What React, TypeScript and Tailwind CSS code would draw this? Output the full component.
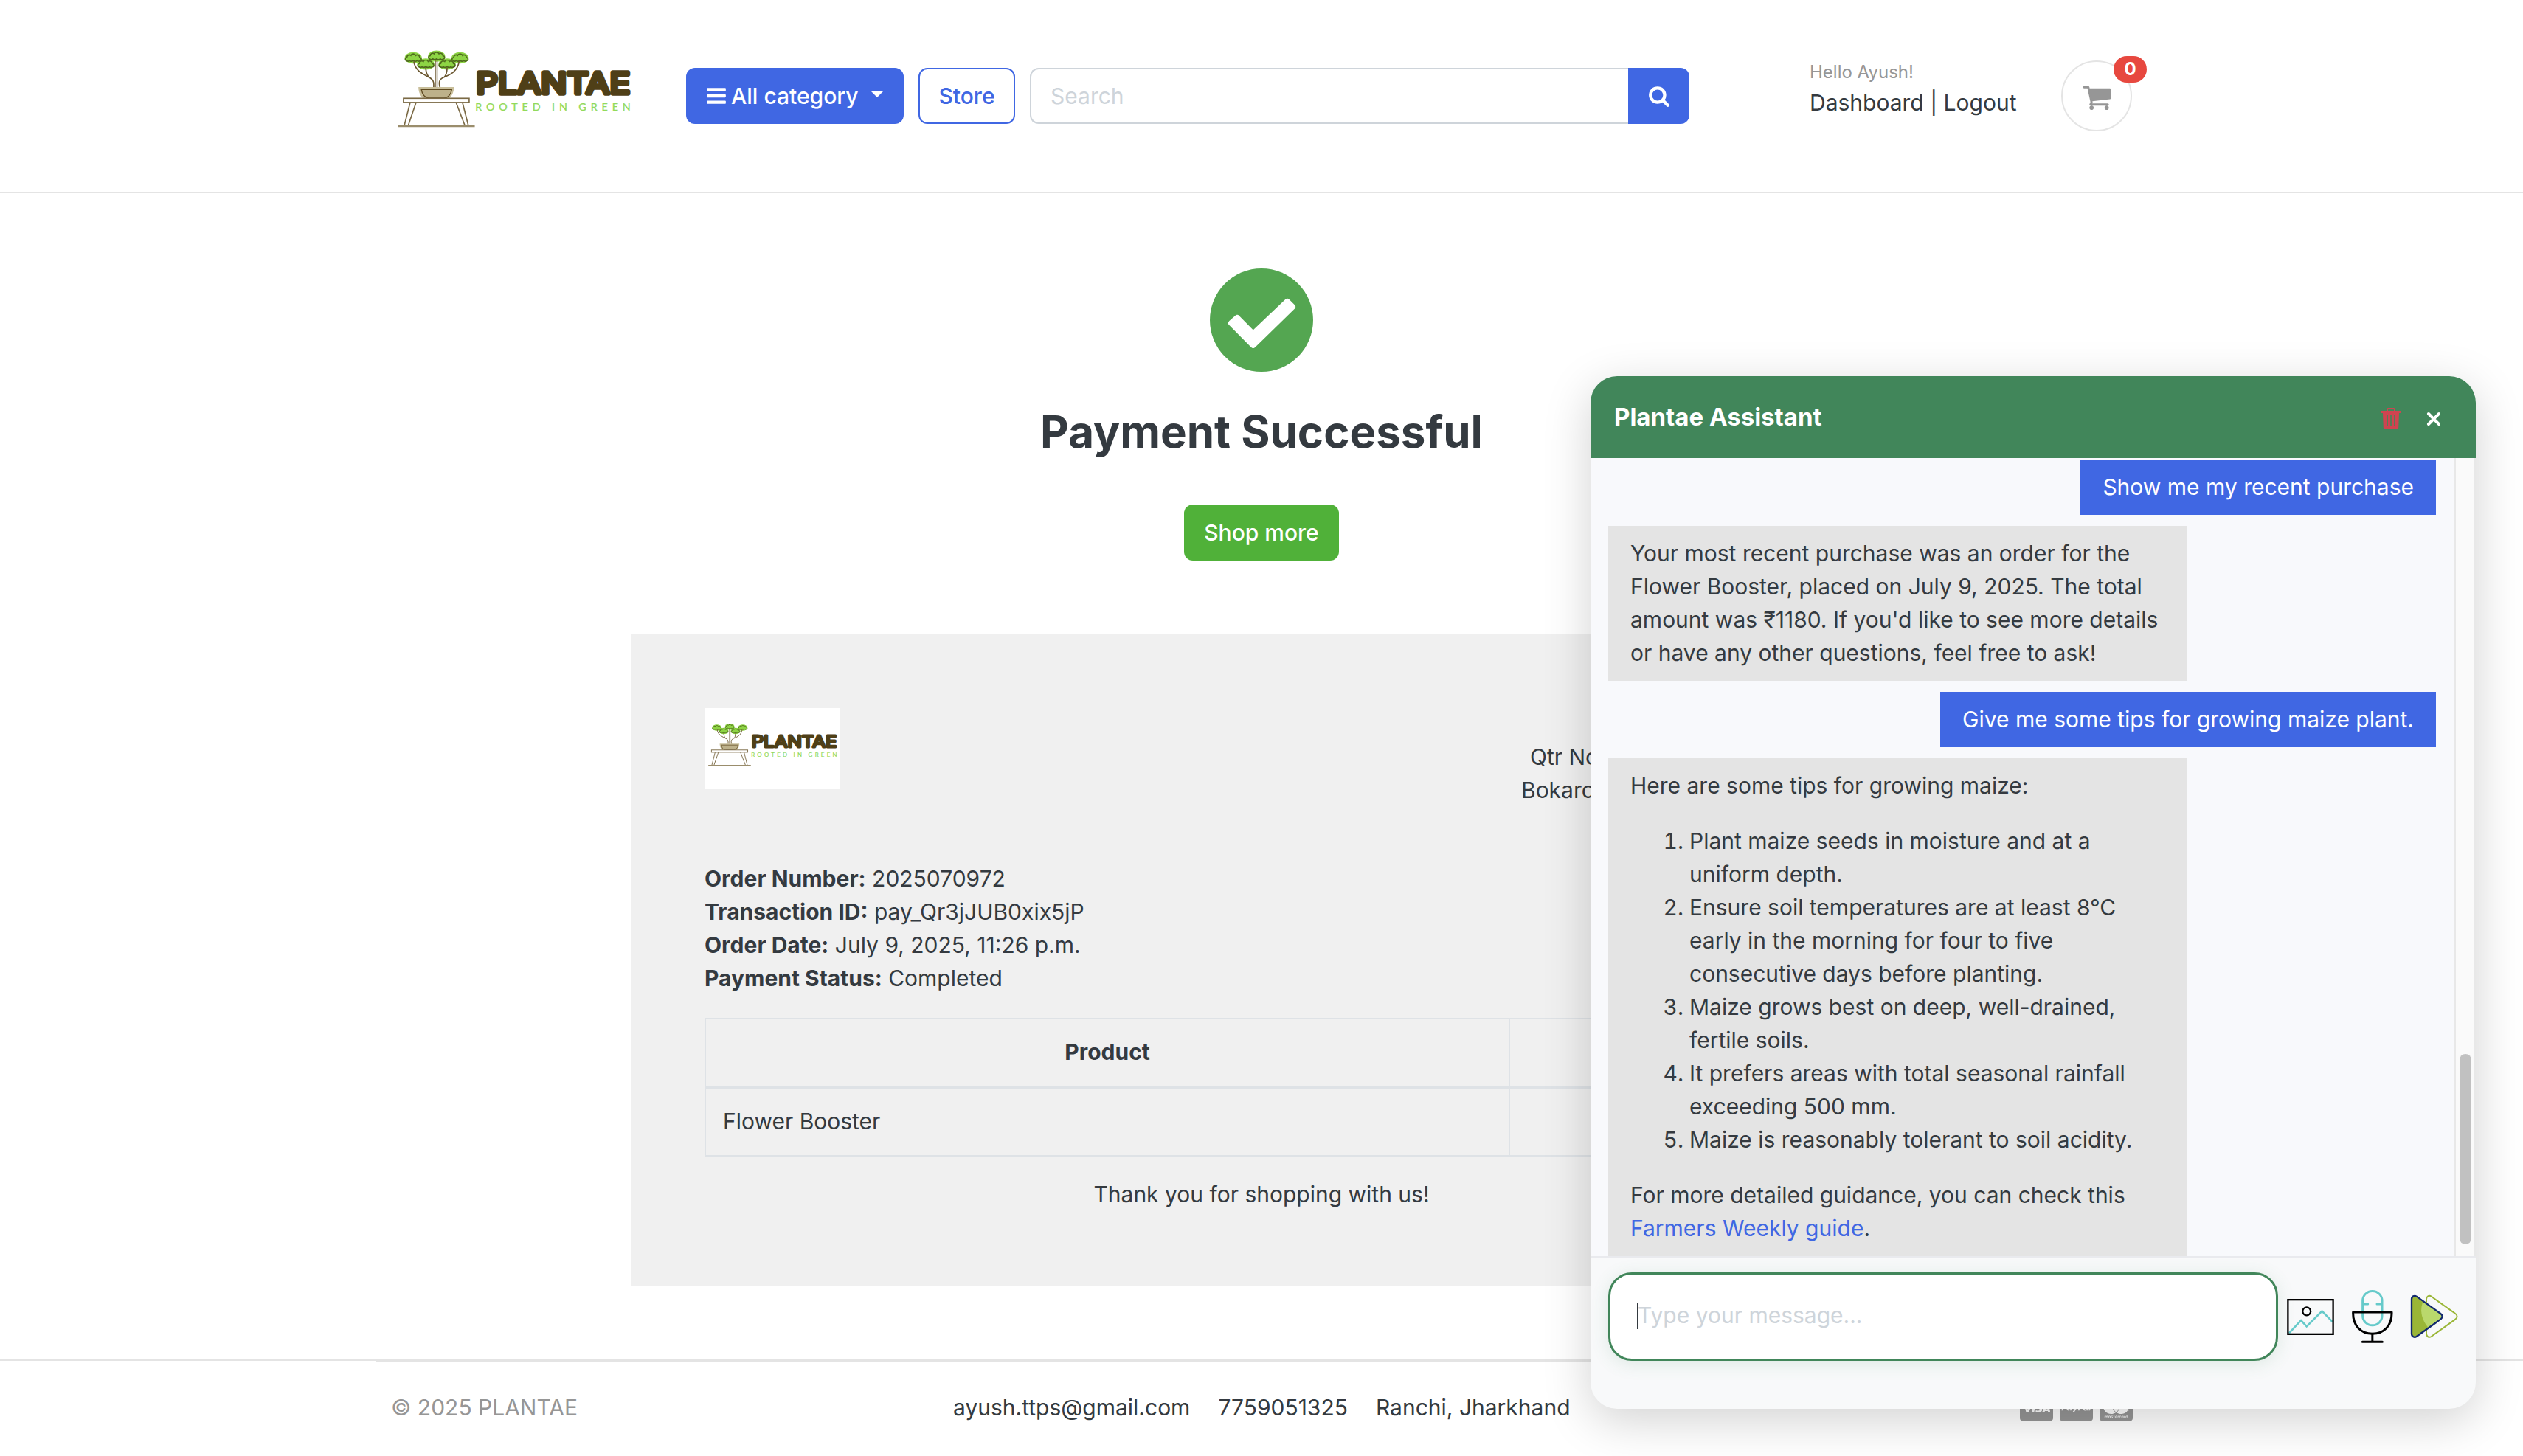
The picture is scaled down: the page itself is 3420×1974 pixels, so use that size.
import React from "react";
import { FaCcVisa, FaCcPaypal, FaCcMastercard } from "react-icons/fa";

const BARS =
  "M1664 1344v128q0 26-19 45t-45 19h-1408q-26 0-45-19t-19-45v-128q0-26 19-45t45-19h1408q26 0 45 19t19 45zm0-512v128q0 26-19 45t-45 19h-1408q-26 0-45-19t-19-45v-128q0-26 19-45t45-19h1408q26 0 45 19t19 45zm0-512v128q0 26-19 45t-45 19h-1408q-26 0-45-19t-19-45v-128q0-26 19-45t45-19h1408q26 0 45 19t19 45z";
const SEARCH =
  "M1216 832q0-185-131.5-316.5t-316.5-131.5-316.5 131.5-131.5 316.5 131.5 316.5 316.5 131.5 316.5-131.5 131.5-316.5zm512 832q0 52-38 90t-90 38q-54 0-90-38l-343-342q-179 124-399 124-143 0-273.5-55.5t-225-150-150-225-55.5-273.5 55.5-273.5 150-225 225-150 273.5-55.5 273.5 55.5 225 150 150 225 55.5 273.5q0 220-124 399l343 343q37 37 37 90z";
const CART =
  "M704 1536q0 52-38 90t-90 38-90-38-38-90 38-90 90-38 90 38 38 90zm896 0q0 52-38 90t-90 38-90-38-38-90 38-90 90-38 90 38 38 90zm128-1088v512q0 24-16.5 42.5t-40.5 21.5l-1044 122q13 60 13 70 0 16-24 64h920q26 0 45 19t19 45-19 45-45 19h-1024q-26 0-45-19t-19-45q0-11 8-31.5t16-36 21.5-40 15.5-29.5l-177-823h-204q-26 0-45-19t-19-45 19-45 45-19h256q16 0 28.5 6.5t19.5 15.5 13 24.5 8 26 5.5 29.5 4.5 26h1201q26 0 45 19t19 45z";

function Glyph({ d, className }: { d: string; className: string }) {
  return (
    <svg viewBox="0 0 1792 1792" className={className} fill="currentColor">
      <path d={d} />
    </svg>
  );
}

const CLOUD =
  "M-27 12c-8-2-8-12 1-14c0-9 10-13 16-8c3-8 17-8 20 0c6-5 16-1 16 8c9 2 9 12 1 14c-4 3-10 2-12-1c-3 4-10 4-15 0c-5 4-12 4-15 0c-2 3-8 4-12 1z";

function Logo({ className }: { className: string }) {
  const crowns: [number, number][] = [
    [91, 67],
    [282, 67],
    [142, 92],
    [229, 92],
    [186, 60],
  ];
  return (
    <svg viewBox="0 0 1024 390" className={className} fill="none">
      {crowns.map(([x, y]) => (
        <ellipse key={x} cx={x} cy={y} rx="35" ry="23" fill="#8dd444" />
      ))}
      {crowns.map(([x, y]) => (
        <path key={x} d={CLOUD} transform={`translate(${x} ${y})`} stroke="#4e6a1c" strokeWidth="5" />
      ))}
      <g stroke="#6b5730" strokeWidth="5">
        <path d="M93 82c6 40 40 52 66 66c18 10 16 26 15 46" />
        <path d="M142 106c0 22 6 32 14 40" />
        <path d="M183 78v116M189 78v116" strokeWidth="3" />
        <path d="M278 82c-6 40-36 54-62 64c-22 9-22 24-14 48" />
        <path d="M229 106c0 22-4 32-12 40" />
      </g>
      <path d="M112 186h145c0 30-18 54-42 54h-62c-24 0-41-24-41-54z" fill="#c9bf9b" />
      <path d="M124 196h124c-3 20-15 35-32 35h-60c-17 0-29-15-32-35z" fill="#bdb18a" stroke="#5f4a20" strokeWidth="4" />
      <g stroke="#7b6a45" strokeWidth="5">
        <rect x="51" y="232" width="268" height="17" fill="#fff" />
        <path d="M78 250L54 344M102 250L70 344M266 250L302 344M292 250L316 344" />
      </g>
      <path d="M28 346h314" stroke="#9a8d6c" strokeWidth="7" />
      <text
        x="347"
        y="213"
        textLength="630"
        lengthAdjust="spacingAndGlyphs"
        fontFamily="Inter, sans-serif"
        fontWeight="400"
        fontSize="120"
        fill="#4f3f17"
        stroke="#4f3f17"
        strokeWidth="16"
        strokeLinejoin="round"
      >
        PLANTAE
      </text>
      <text
        x="344"
        y="281"
        textLength="634"
        lengthAdjust="spacing"
        fontFamily="Lato, sans-serif"
        fontSize="43"
        fill="#92da5a"
        stroke="#92da5a"
      >
        ROOTED IN GREEN
      </text>
    </svg>
  );
}

function Header() {
  return (
    <header className="h-[262px] border-b-2 border-[#e4e4e4] bg-white">
      <div className="mx-auto flex h-[260px] w-[2400px] items-center pl-5">
        <Logo className="-mt-[18px] h-[130px] w-[340px]" />
        <button className="ml-[60px] flex h-[76px] w-[295px] items-center rounded-xl bg-[#4067e3] pl-[26px] font-medium text-white">
          <Glyph d={BARS} className="h-[30px] w-[30px]" />
          <span className="ml-[5px]">All category</span>
          <span className="mb-[5px] ml-4 border-x-[9px] border-t-[9px] border-x-transparent border-t-white" />
        </button>
        <button className="ml-5 h-[76px] w-[131px] rounded-xl border-2 border-[#4067e3] font-medium text-[#4067e3]">
          Store
        </button>
        <div className="ml-5 flex h-[76px] w-[894px]">
          <div className="flex flex-1 items-center rounded-l-xl border-2 border-r-0 border-[#ced4da] pl-[26px] text-[#ced4da]">
            Search
          </div>
          <div className="flex w-[83px] items-center justify-center rounded-r-xl bg-[#4067e3] text-white">
            <Glyph d={SEARCH} className="h-[30px] w-[30px]" />
          </div>
        </div>
        <div className="mb-[18px] ml-[163px] w-[300px] whitespace-nowrap">
          <div className="text-[24px] leading-[36px] text-[#969696]">Hello Ayush!</div>
          <div className="leading-[46px]">Dashboard | Logout</div>
        </div>
        <div className="relative ml-[41px] flex h-24 w-24 items-center justify-center rounded-full border-2 border-[#e4e4e4] text-[#969696]">
          <Glyph d={CART} className="mt-[3px] h-[41px] w-[41px]" />
          <span className="absolute -top-2 left-[69px] flex h-9 w-[45px] items-center justify-center rounded-full bg-[#e7483f] text-[24px] font-bold leading-none text-white">
            0
          </span>
        </div>
      </div>
    </header>
  );
}

function OrderLine({ label, value }: { label: string; value: string }) {
  return (
    <div>
      <b className="font-bold">{label}</b> {value}
    </div>
  );
}

function Receipt() {
  return (
    <section className="mt-[100px] h-[883px] w-[1710px] bg-[#f0f0f0] p-[100px]">
      <div className="flex h-[209px] justify-between">
        <div className="h-[110px] w-[183px] overflow-hidden bg-white pt-[14px]">
          <Logo className="h-[72px] w-[188px] max-w-none" />
        </div>
        <div className="mt-[44px] w-[403px] whitespace-nowrap">
          <div className="pl-[12px]">Qtr No.</div>
          <div>Bokaro</div>
        </div>
      </div>
      <OrderLine label="Order Number:" value="2025070972" />
      <OrderLine label="Transaction ID:" value="pay_Qr3jJUB0xix5jP" />
      <OrderLine label="Order Date:" value="July 9, 2025, 11:26 p.m." />
      <OrderLine label="Payment Status:" value="Completed" />
      <div className="mt-[31px] border-2 border-[#dee2e6]">
        <div className="flex h-[94px] border-b-4 border-[#dee2e6]">
          <div className="w-[1090px] border-r-2 border-[#dee2e6] pt-[22px] text-center font-bold">Product</div>
        </div>
        <div className="flex h-[90px]">
          <div className="w-[1090px] border-r-2 border-[#dee2e6] pl-[23px] pt-[22px]">Flower Booster</div>
        </div>
      </div>
      <div className="mt-[29px] text-center">Thank you for shopping with us!</div>
    </section>
  );
}

function Footer() {
  return (
    <footer className="mt-[100px] h-[131px] border-t-2 border-[#e4e4e4]">
      <div className="mx-auto flex w-[2400px] border-t-2 border-[#e4e4e4] pl-5 pt-[39px]">
        <div className="w-[762px] text-[#969696]">© 2025 PLANTAE</div>
        <div className="flex w-[1446px] gap-[38px]">
          <span>ayush.ttps@gmail.com</span>
          <span>7759051325</span>
          <span>Ranchi, Jharkhand</span>
        </div>
        <div className="mt-[3px] flex gap-[9px] text-[#969696]">
          <FaCcVisa className="h-[40px] w-[45px]" />
          <FaCcPaypal className="h-[40px] w-[45px]" />
          <FaCcMastercard className="h-[40px] w-[45px]" />
        </div>
      </div>
    </footer>
  );
}

function ImageIcon() {
  return (
    <svg viewBox="0 0 192 148" className="h-[49px] w-[64px]" fill="none" strokeWidth="7">
      <path d="M8 140L57 88L80 113L143 50L186 94" stroke="#66caca" strokeWidth="8" />
      <rect x="3.5" y="3.5" width="185" height="141" stroke="#000" />
      <circle cx="80" cy="51" r="16.5" stroke="#000" />
    </svg>
  );
}

function MicIcon() {
  return (
    <svg viewBox="0 0 168 216" className="h-[72px] w-[56px]" fill="none" strokeLinecap="round">
      <g stroke="#66caca" strokeWidth="9">
        <rect x="44" y="4.500" width="79" height="139" rx="39" />
        <path d="M47 57h18M102 57h18" />
      </g>
      <g stroke="#000" strokeWidth="9">
        <path d="M5 90H162C164 145 130 178 83.500 178C37 178 3 145 5 90Z" strokeLinejoin="round" />
        <path d="M83.500 178v31M43 211h81" />
      </g>
    </svg>
  );
}

function SendIcon() {
  const tri = "M3 16C3 5 14-1 23 5L121 75C130 81 130 92 121 98L23 168C14 174 3 168 3 157Z";
  return (
    <svg viewBox="0 0 192 174" className="h-[58px] w-[64px] overflow-visible" fill="none" strokeWidth="6">
      <clipPath id="front">
        <path d={tri} />
      </clipPath>
      <path d={tri} transform="translate(60 0)" stroke="#9ab637" />
      <path d={tri} fill="#9ab637" />
      <g clipPath="url(#front)">
        <path d="M64 0C34 40 34 88 72 134L150 174V0Z" fill="#bad86c" />
      </g>
      <path d={tri} stroke="#12296f" strokeWidth="7" />
    </svg>
  );
}

const TIPS = [
  "Plant maize seeds in moisture and at a uniform depth.",
  "Ensure soil temperatures are at least 8°C early in the morning for four to five consecutive days before planting.",
  "Maize grows best on deep, well-drained, fertile soils.",
  "It prefers areas with total seasonal rainfall exceeding 500 mm.",
  "Maize is reasonably tolerant to soil acidity.",
];

function ChatWidget() {
  return (
    <aside className="absolute left-[2156px] top-[510px] flex h-[1400px] w-[1200px] flex-col overflow-hidden rounded-[36px] bg-[#f8f9fa] shadow-[0_16px_64px_rgba(0,0,0,0.18)]">
      <div className="flex h-[111px] shrink-0 items-center bg-[#41865a] pl-8 text-white">
        <div className="flex-1 text-[33px] font-bold">Plantae Assistant</div>
        <svg viewBox="0 0 26 29" className="mt-[3px] h-[29px] w-[26px]">
          <path d="M8 4V2.500Q8 1 9.500 1h7Q18 1 18 2.500V4" stroke="#cf4450" strokeWidth="2" fill="none" />
          <path d="M0 4h26v3H0zM2 7h22l-.8 20q-.1 2-2 2H4.800q-1.900 0-2-2z" fill="#cf4450" />
          <path d="M8 10v15M13 10v15M18 10v15" stroke="#41865a" strokeWidth="1.600" />
        </svg>
        <svg viewBox="0 0 20 20" className="ml-[35px] mr-[47px] mt-[4px] h-[20px] w-[20px]">
          <path d="M3 3l14 14M17 3L3 17" stroke="#fff" strokeWidth="4" strokeLinecap="round" />
        </svg>
      </div>

      <div className="flex h-[1082px] shrink-0 bg-[#f8f9fc]">
        <div className="flex flex-1 flex-col gap-[15px] overflow-hidden pl-6 pr-[25px] pt-[2px]">
          <div className="shrink-0 self-end bg-[#4067e3] px-[30px] py-[15px] text-white">Show me my recent purchase</div>
          <div className="w-[785px] shrink-0 bg-[#e4e4e4] px-[30px] py-[15px]">
            Your most recent purchase was an order for the Flower Booster, placed on July 9, 2025. The total amount was
            ₹1180. If you'd like to see more details or have any other questions, feel free to ask!
          </div>
          <div className="shrink-0 self-end bg-[#4067e3] px-[30px] py-[15px] text-white">
            Give me some tips for growing maize plant.
          </div>
          <div className="w-[785px] shrink-0 bg-[#e4e4e4] px-[30px] py-[15px]">
            <p className="mb-[30px]">Here are some tips for growing maize:</p>
            <ol className="mb-[30px] list-decimal pl-[80px]">
              {TIPS.map((tip) => (
                <li key={tip}>{tip}</li>
              ))}
            </ol>
            <p>
              For more detailed guidance, you can check this{" "}
              <span className="text-[#4067e3]">Farmers Weekly guide</span>.
            </p>
          </div>
        </div>
        <div className="flex w-[29px] flex-col items-center border-x-2 border-[#e8e8e8] bg-[#fafafa]">
          <div className="mt-[808px] h-[258px] w-4 rounded-full bg-[#c1c1c1]" />
        </div>
      </div>

      <div className="flex flex-1 items-start border-t-2 border-[#e9eaee] pl-6 pt-5">
        <div className="flex h-[120px] w-[908px] items-center rounded-[32px] border-3 border-[#41865a] bg-white pb-[3px] pl-[36px] text-[#ced4da] shadow-[0_4px_24px_rgba(65,134,90,0.14)]">
          <span className="h-9 w-[2px] bg-[#343a40]" />
          <span className="-ml-px">Type your message...</span>
        </div>
        <div className="ml-3 flex h-[120px] items-center">
          <ImageIcon />
          <div className="ml-6 mr-6">
            <MicIcon />
          </div>
          <SendIcon />
        </div>
      </div>
    </aside>
  );
}

export default function App() {
  return (
    <div className="relative h-[1974px] w-[3420px] overflow-hidden bg-white font-['Inter',sans-serif] text-[30px] leading-[45px] text-[#343a40]">
      <Header />
      <main className="flex flex-col items-center pt-[102px]">
        <svg viewBox="0 0 140 140" className="h-[140px] w-[140px]">
          <circle cx="70" cy="70" r="70" fill="#54a651" />
          <path
            d="M29 74L37 67L58.700 89L105 45L112 52L58.700 104Z"
            fill="#fff"
            stroke="#fff"
            strokeWidth="8"
            strokeLinejoin="round"
          />
        </svg>
        <h1 className="mt-[45px] text-[60px] font-bold leading-[72px]">Payment Successful</h1>
        <button className="mt-[63px] h-[76px] w-[210px] rounded-xl bg-[#50b139] font-medium text-white">
          Shop more
        </button>
        <Receipt />
      </main>
      <Footer />
      <ChatWidget />
    </div>
  );
}
